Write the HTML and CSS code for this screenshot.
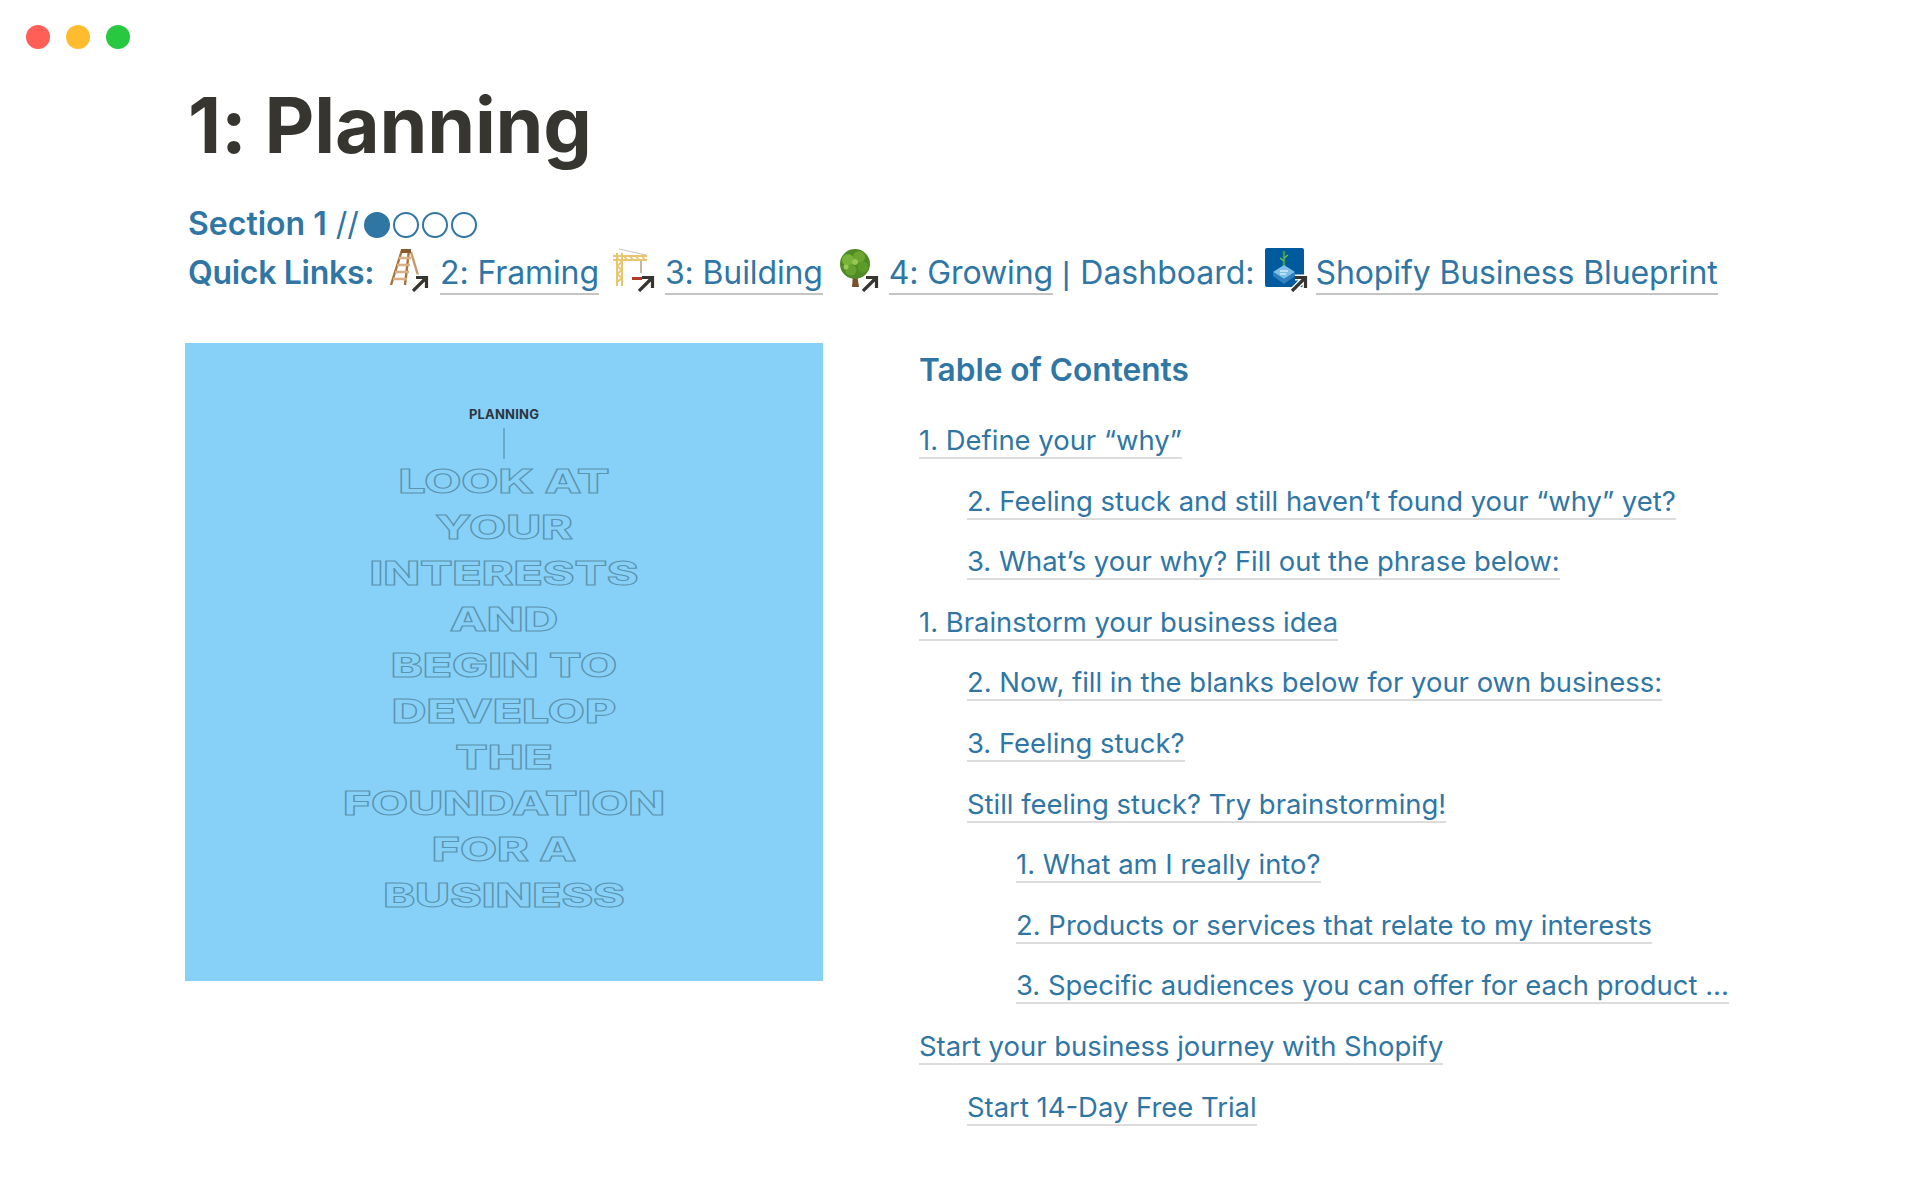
FILE: index.html
```html
<!DOCTYPE html>
<html lang="en">
<head>
<meta charset="UTF-8" />
<title>1: Planning</title>
<link rel="stylesheet" href="styles.css">
</head>
<body>

<!-- Shared link arrow for the page icons -->
<svg class="defs" width="0" height="0">
  <symbol id="link-arrow" viewBox="0 0 18 18">
    <path d="M2 17 L14 5 M5 3.5 H15.5 V14" fill="none" stroke="#fff" stroke-width="6"/>
    <path d="M2 17 L14 5 M5 3.5 H15.5 V14" fill="none" stroke="#37352f" stroke-width="3.2"/>
  </symbol>
</svg>

<!-- Window buttons -->
<div class="window-bar">
  <span class="dot red"></span>
  <span class="dot yellow"></span>
  <span class="dot green"></span>
</div>

<main class="page">
  <h1>1: Planning</h1>

  <div class="intro">
    <p><strong>Section 1</strong> // <span class="steps"><i class="step on"></i><i class="step"></i><i class="step"></i><i class="step"></i></span></p>
    <p class="quick">
      <strong>Quick Links:</strong>

      <span class="page-icon ladder">
        <svg viewBox="0 0 44 44" width="44" height="44">
          <g fill="none" stroke="#a9743f" stroke-width="2.4">
            <path d="M15 2 L4 37"/>
            <path d="M22 2 L18 37"/>
            <path d="M24 4 L33 34" stroke="#c89a68"/>
            <path d="M12 10 H24 M10 17 H23 M8 24 H22 M6 31 H20" stroke="#d8b084"/>
          </g>
          <path d="M14 1 H24 V5 H14 Z" fill="#8a5a2e"/>
          <use href="#link-arrow" x="24" y="26" width="18" height="18"/>
        </svg>
      </span>
      <a href="#">2: Framing</a>

      <span class="page-icon crane">
        <svg viewBox="0 0 44 44" width="44" height="44">
          <g fill="none" stroke="#e8c56f" stroke-width="2">
            <path d="M5 5 V38 M10 5 V38"/>
            <path d="M5 10 L10 14 M10 14 L5 18 M5 18 L10 22 M10 22 L5 26 M5 26 L10 30 M10 30 L5 34"/>
            <path d="M1 8 H35 M1 12 H35"/>
            <path d="M12 8 L15 12 M18 8 L21 12 M24 8 L27 12 M30 8 L33 12"/>
          </g>
          <path d="M7 1 L34 7" stroke="#c9c3b4" stroke-width="1" fill="none"/>
          <path d="M29 13 V25" stroke="#9a8a5a" stroke-width="1.2"/>
          <rect x="20" y="29" width="11" height="3" fill="#b5382a"/>
          <use href="#link-arrow" x="25" y="26" width="18" height="18"/>
        </svg>
      </span>
      <a href="#">3: Building</a>

      <span class="page-icon tree">
        <svg viewBox="0 0 44 44" width="44" height="44">
          <path d="M17 26 L16 39 H23 L21 26 Z" fill="#7a5230"/>
          <circle cx="19" cy="16" r="15" fill="#4f8a24"/>
          <circle cx="12" cy="12" r="6" fill="#78b33a"/>
          <circle cx="23" cy="9" r="6" fill="#6ba62f"/>
          <circle cx="27" cy="19" r="5.5" fill="#5c9a2a"/>
          <circle cx="15" cy="22" r="5.5" fill="#66a22f"/>
          <circle cx="10" cy="19" r="2.5" fill="#98cc55"/>
          <circle cx="19" cy="14" r="3" fill="#93c94e"/>
          <use href="#link-arrow" x="25" y="26" width="18" height="18"/>
        </svg>
      </span>
      <a href="#">4: Growing</a>
      <span class="pipe">|</span> Dashboard:

      <span class="page-icon blueprint">
        <svg viewBox="0 0 44 44" width="44" height="44">
          <rect x="0" y="0" width="39" height="39" rx="2" fill="#005a9e"/>
          <path d="M19 3 V18" stroke="#3f9a4a" stroke-width="2.4" fill="none"/>
          <path d="M19 10 L23 7 M19 13 L15 10" stroke="#6fbf5a" stroke-width="1.4" fill="none"/>
          <path d="M8 24 L19 17 L30 24 L19 31 Z" fill="#7cc0e8"/>
          <path d="M8 24 V28 L19 36 L30 28 V24 L19 31 Z" fill="#2f80bd"/>
          <path d="M15 23 H23 M15 26 H21" stroke="#fff" stroke-width="1.2" fill="none"/>
          <use href="#link-arrow" x="25" y="26" width="18" height="18"/>
        </svg>
      </span>
      <a href="#">Shopify Business Blueprint</a>
    </p>
  </div>

  <div class="columns">
    <!-- Cover picture -->
    <div class="cover">
      <div class="cover-label">PLANNING</div>
      <div class="cover-rule"></div>
      <div class="cover-lines">
        <span>LOOK AT</span>
        <span>YOUR</span>
        <span>INTERESTS</span>
        <span>AND</span>
        <span>BEGIN TO</span>
        <span>DEVELOP</span>
        <span>THE</span>
        <span>FOUNDATION</span>
        <span>FOR A</span>
        <span>BUSINESS</span>
      </div>
    </div>

    <!-- Table of contents -->
    <nav class="toc">
      <h2>Table of Contents</h2>
      <ul>
        <li><a href="#">1. Define your “why”</a></li>
        <li class="sub"><a href="#">2. Feeling stuck and still haven’t found your “why” yet?</a></li>
        <li class="sub"><a href="#">3. What’s your why? Fill out the phrase below:</a></li>
        <li><a href="#">1. Brainstorm your business idea</a></li>
        <li class="sub"><a href="#">2. Now, fill in the blanks below for your own business:</a></li>
        <li class="sub"><a href="#">3. Feeling stuck?</a></li>
        <li class="sub"><a href="#">Still feeling stuck? Try brainstorming!</a></li>
        <li class="sub2"><a href="#">1. What am I really into?</a></li>
        <li class="sub2"><a href="#">2. Products or services that relate to my interests</a></li>
        <li class="sub2"><a href="#">3. Specific audiences you can offer for each product ...</a></li>
        <li><a href="#">Start your business journey with Shopify</a></li>
        <li class="sub"><a href="#">Start 14-Day Free Trial</a></li>
      </ul>
    </nav>
  </div>
</main>

</body>
</html>
```

FILE: styles.css
```css
/* Reset and basics */
* {margin:0; padding:0; box-sizing:border-box;}
html, body {
  height: 100%;
  background: #fff;
  font-family: 'Inter', 'Liberation Sans', sans-serif;
  color: #2f76a5;
  overflow: hidden;
}
a {color: inherit; text-decoration: none;}
.defs {position: absolute;}

/* Window buttons */
.window-bar {
  display: flex;
  gap: 16px;
  padding: 25px 26px 0;
}
.dot {
  width: 24px;
  height: 24px;
  border-radius: 50%;
}
.red {background: #ff5f57;}
.yellow {background: #febc2e;}
.green {background: #28c840;}

/* Page */
.page {
  padding-left: 185px;
}
h1 {
  padding: 30px 0 0 3px;
  font-size: 77px;
  line-height: 93px;
  font-weight: 700;
  letter-spacing: -0.2px;
  color: #37352f;
}

/* Section line and quick links */
.intro {
  margin-top: 27px;
  padding-left: 3px;
  font-size: 32px;
  line-height: 49px;
}
.intro strong {font-weight: 600;}
.quick {white-space: nowrap;}
.quick strong {letter-spacing: -0.3px;}
.quick a {
  border-bottom: 2px solid #c4c4c4;
  padding-bottom: 1px;
  letter-spacing: -0.12px;
}
.pipe {
  font-family: 'Liberation Sans', sans-serif;
  margin-right: 1px;
}
.steps {
  display: inline-flex;
  gap: 3px;
  margin-left: -4px;
  vertical-align: -3px;
}
.step {
  display: block;
  width: 26px;
  height: 26px;
  border: 2px solid #2f76a5;
  border-radius: 50%;
}
.step.on {background: #2f76a5;}
.page-icon {
  display: inline-block;
  width: 44px;
  height: 44px;
  margin-left: 4px;
  vertical-align: -8px;
}
.page-icon.blueprint {
  margin-left: 1px;
  margin-right: -2px;
}
.page-icon svg {display: block;}

/* Two columns */
.columns {
  display: grid;
  grid-template-columns: 638px 1fr;
  gap: 96px;
  margin-top: 45px;
}

/* Cover picture */
.cover {
  width: 638px;
  height: 638px;
  background: #87d1f9;
  text-align: center;
  padding-top: 63px;
  overflow: hidden;
}
.cover-label {
  font-size: 13px;
  line-height: 16px;
  font-weight: 700;
  letter-spacing: .2px;
  color: #2b3640;
}
.cover-rule {
  width: 2px;
  height: 31px;
  margin: 6px auto 0;
  background: #69a9c9;
}
.cover-lines span {
  display: block;
  height: 46px;
  font-size: 32px;
  line-height: 46px;
  font-weight: 800;
  color: transparent;
  -webkit-text-stroke: 1px #5c93ae;
  transform: scaleX(1.5);
}

/* Table of contents */
.toc {
  font-size: 27.45px;
}
.toc h2 {
  font-size: 31.6px;
  line-height: 40px;
  font-weight: 600;
  margin: 7px 0 20px;
}
.toc ul {list-style: none;}
.toc li {
  height: 60.6px;
  line-height: 60.6px;
  white-space: nowrap;
}
.toc li a {
  border-bottom: 2px solid #dcdcdc;
}
.toc li.sub {padding-left: 48px;}
.toc li.sub2 {padding-left: 97px;}
```
